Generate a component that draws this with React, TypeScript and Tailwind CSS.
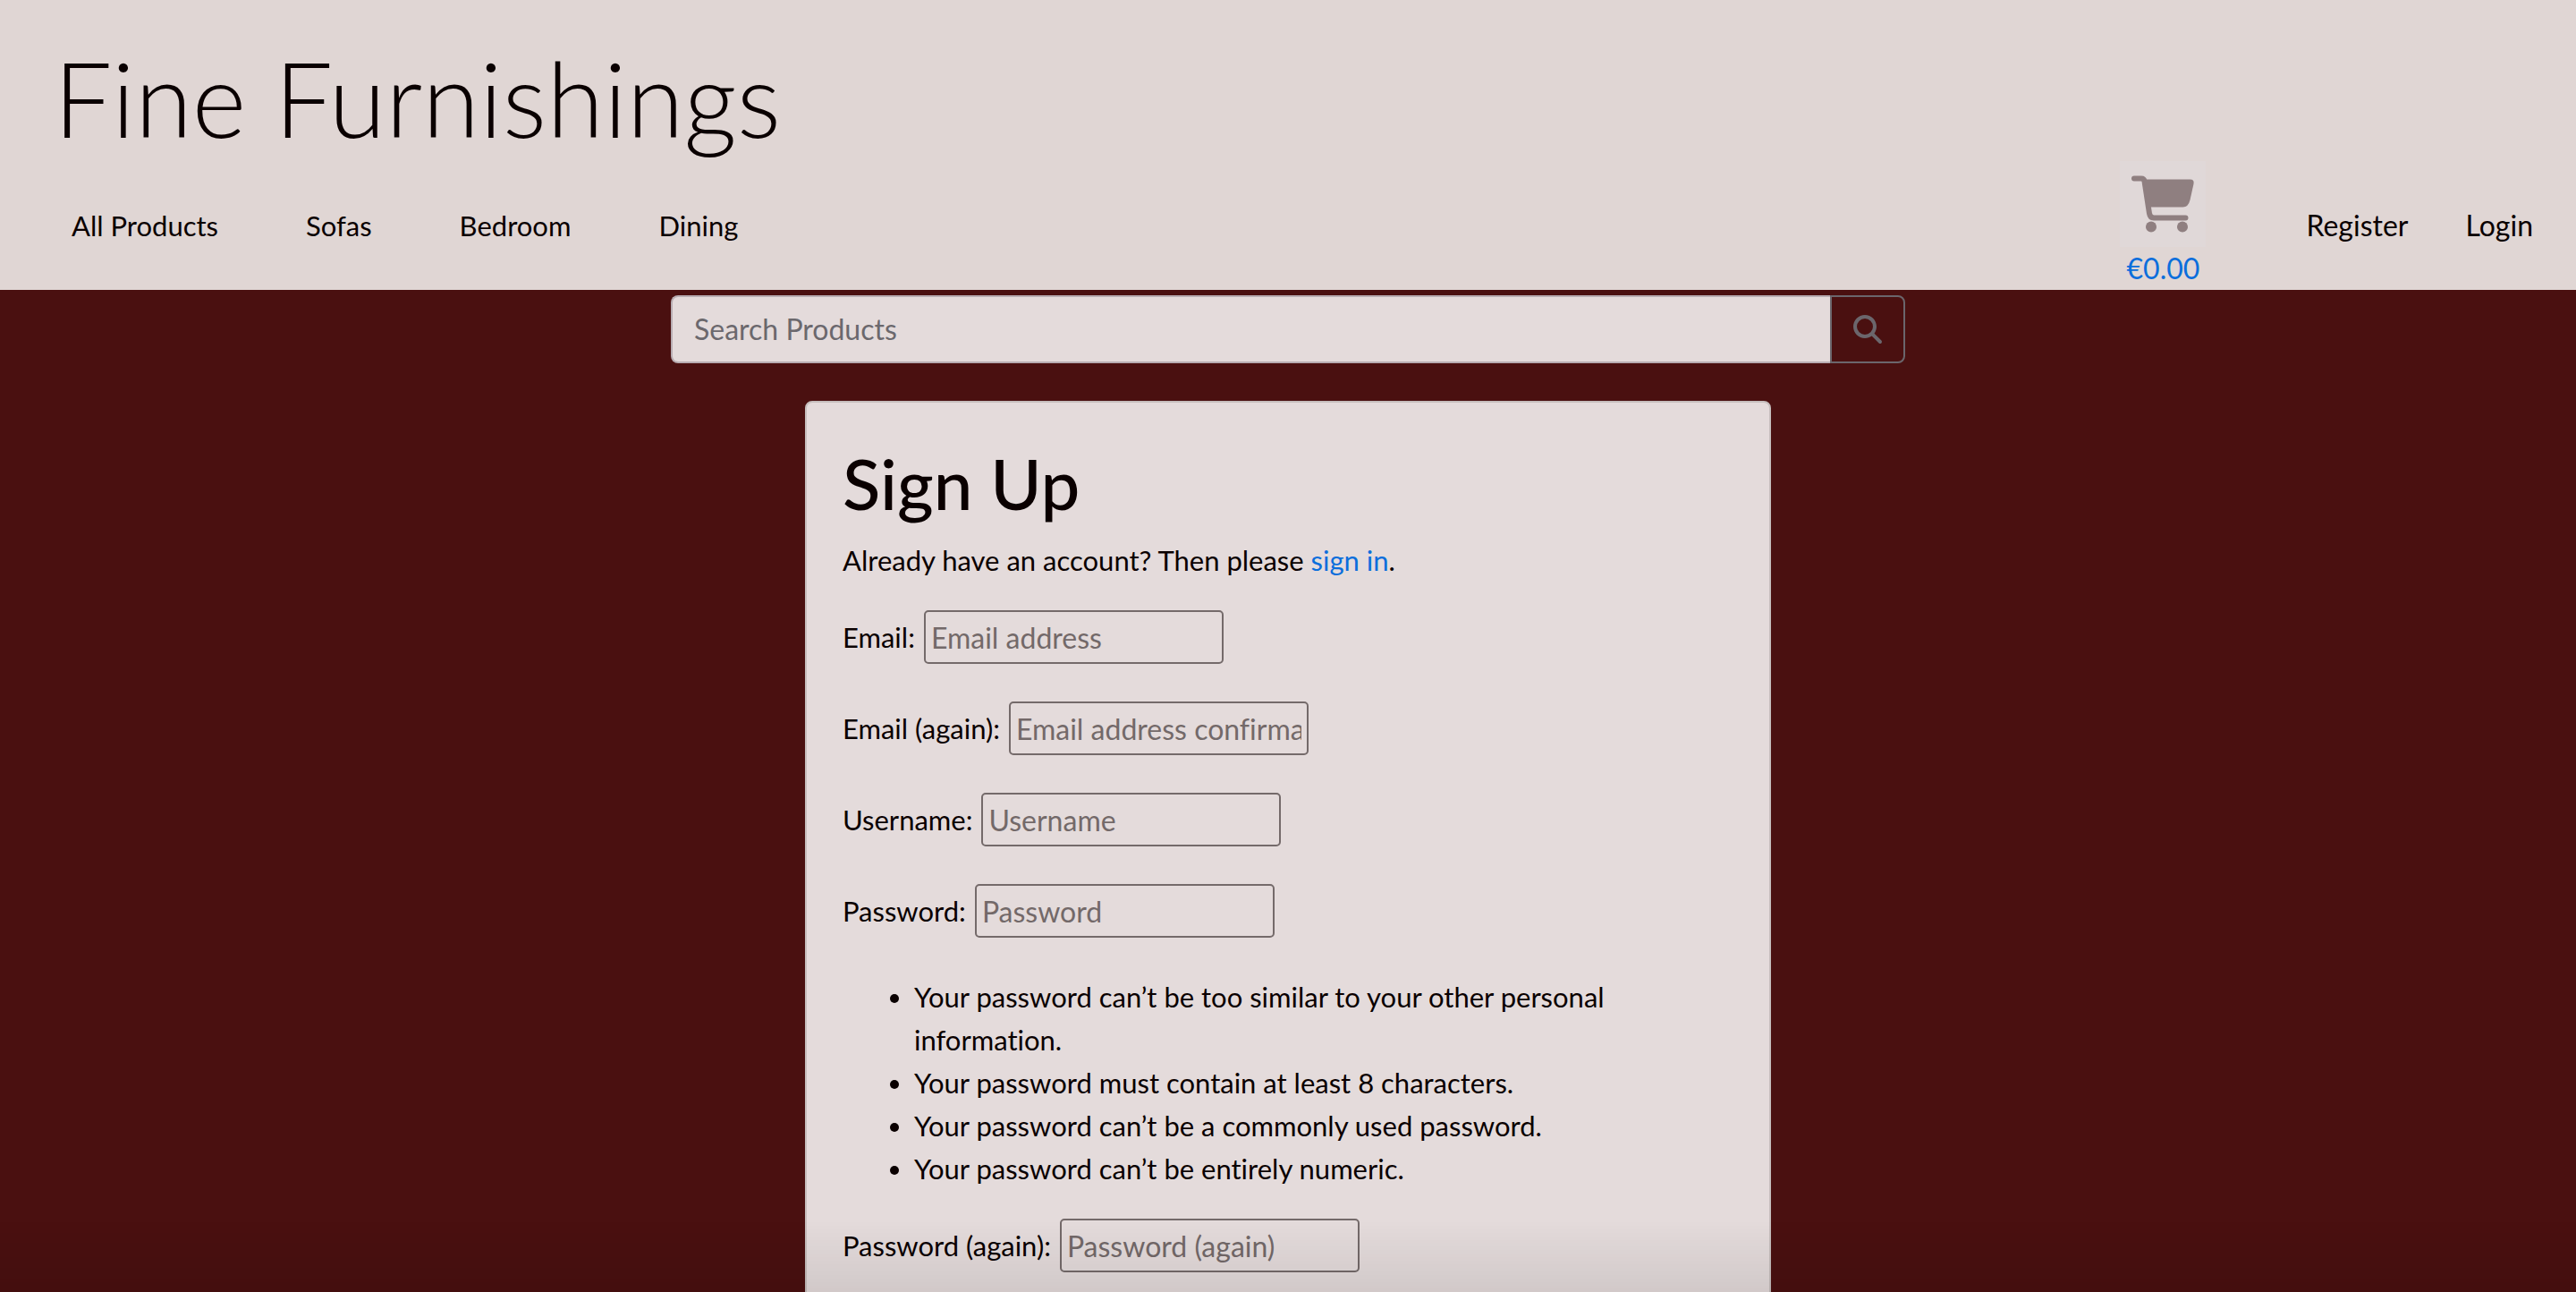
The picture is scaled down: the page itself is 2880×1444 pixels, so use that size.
import { FaMagnifyingGlass } from "react-icons/fa6";

const categories = ["All Products", "Sofas", "Bedroom", "Dining"];

const passwordRules = [
  "Your password can’t be too similar to your other personal information.",
  "Your password must contain at least 8 characters.",
  "Your password can’t be a commonly used password.",
  "Your password can’t be entirely numeric.",
];

function CartIcon() {
  return (
    <svg viewBox="0 0 96 96" className="size-24 bg-[#e0d8d8] text-[#8f7f80]" fill="currentColor" aria-hidden="true">
      <path
        d="M16 19.5h8q3 0 3.500 3l5.500 36q.8 5 5 5h35.500"
        fill="none"
        stroke="currentColor"
        strokeWidth="6"
        strokeLinecap="round"
        strokeLinejoin="round"
      />
      <path d="M26 20.500h52.500q5 0 4 5l-4 18q-2 8-8 8H31z" />
      <circle cx="35" cy="73.500" r="6" />
      <circle cx="70" cy="73.500" r="6" />
    </svg>
  );
}

function Header() {
  return (
    <header className="bg-[#e0d6d4]">
      <h1 className="px-[60px] pt-10 text-[116px] leading-[140px] font-light">
        <a href="#home">Fine Furnishings</a>
      </h1>
      <div className="flex items-center justify-between pr-12 pl-20">
        <nav aria-label="Categories">
          <ul className="flex gap-[98px]">
            {categories.map((name) => (
              <li key={name}>
                <a href="#products">{name}</a>
              </li>
            ))}
          </ul>
        </nav>
        <div className="flex items-center gap-16 text-[32px] leading-[48px]">
          <a href="#cart" aria-label="Cart, €0.00" className="mr-12 flex flex-col items-center text-[#0b6edc]">
            <CartIcon />
            <span>€0.00</span>
          </a>
          <a href="#register">Register</a>
          <a href="#login">Login</a>
        </div>
      </div>
    </header>
  );
}

function SearchBar() {
  return (
    <form className="mx-auto mt-1.5 flex h-[76px] w-full max-w-[1380px]" role="search">
      <input
        type="search"
        aria-label="Search Products"
        placeholder="Search Products"
        className="min-w-0 flex-1 rounded-l-lg border-2 border-r-0 border-[#b8adb2] bg-[#e4dbdb] px-6 text-[32px] placeholder:text-[#6b686d]"
      />
      <button
        type="submit"
        aria-label="Search"
        className="flex w-[84px] items-center justify-center rounded-r-lg border-2 border-[#6b666c] text-[#6b666c]"
      >
        <FaMagnifyingGlass className="size-8" />
      </button>
    </form>
  );
}

function Field({ id, label, placeholder, type }: { id: string; label: string; placeholder: string; type: string }) {
  return (
    <div className="flex items-center gap-2.5">
      <label htmlFor={id}>{label}</label>
      <input
        id={id}
        type={type}
        placeholder={placeholder}
        className="h-[60px] w-[335px] rounded-[5px] border-2 border-[#746a6a] px-1.5 text-[32px] [font-variant-ligatures:none] placeholder:text-[#736969]"
      />
    </div>
  );
}

export default function App() {
  return (
    <div className="min-h-screen bg-[#4a1010] font-[Lato,'Open_Sans',sans-serif] text-[31px] leading-[48px] text-[#0a0000] [font-variant-ligatures:none]">
      <Header />
      <SearchBar />
      <main className="mx-auto mt-[42px] w-full max-w-[1080px] rounded-lg border-2 border-[#c6bebd] bg-[#e4dbdb] px-10 pt-[42px] pb-10">
        <h2 className="mb-3.5 text-[78px] leading-[96px] font-medium">Sign Up</h2>
        <p className="mb-8">
          Already have an account? Then please{" "}
          <a href="#signin" className="text-[#0b6edc]">
            sign in
          </a>
          .
        </p>
        <form>
          <div className="flex flex-col gap-[42px]">
            <Field id="email" label="Email:" placeholder="Email address" type="email" />
            <Field id="email2" label="Email (again):" placeholder="Email address confirmation" type="email" />
            <Field id="username" label="Username:" placeholder="Username" type="text" />
            <Field id="password1" label="Password:" placeholder="Password" type="password" />
          </div>
          <ul className="mt-[42px] mb-8 list-disc pl-20">
            {passwordRules.map((rule) => (
              <li key={rule}>{rule}</li>
            ))}
          </ul>
          <Field id="password2" label="Password (again):" placeholder="Password (again)" type="password" />
        </form>
      </main>
      <div className="pointer-events-none fixed inset-x-0 bottom-0 h-20 bg-linear-to-t from-black/8 to-transparent" />
    </div>
  );
}
